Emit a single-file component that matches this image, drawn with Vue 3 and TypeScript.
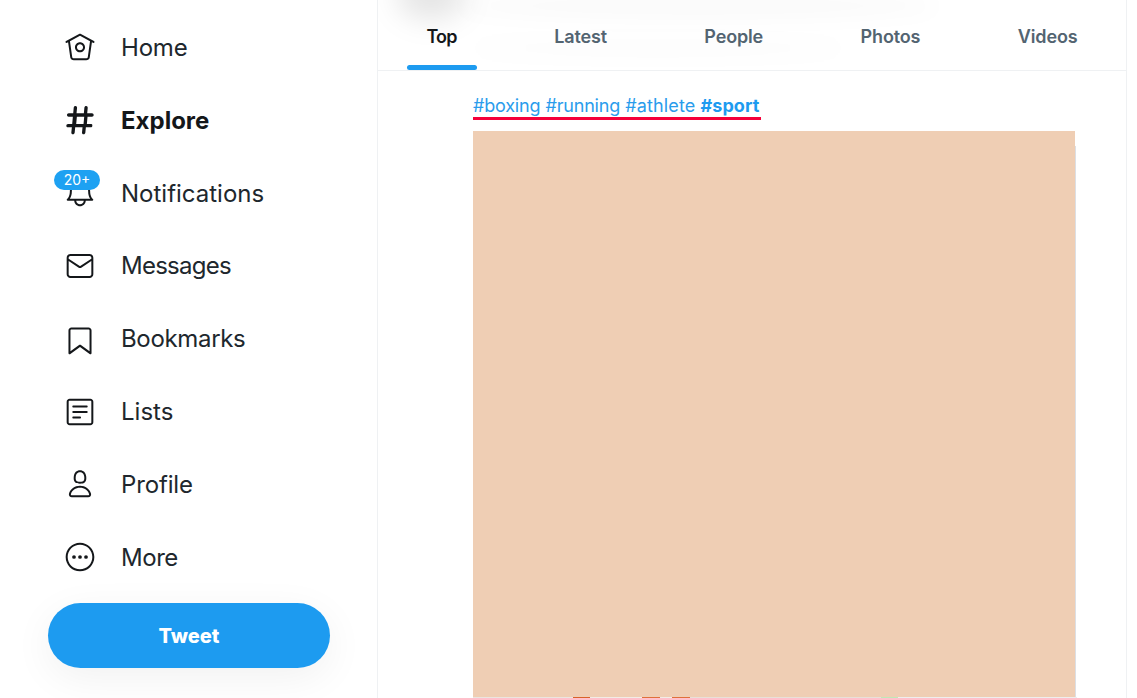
<template>
  <div class="page">
    <aside class="side">
      <nav class="menu">
        <a v-for="item in menu" :key="item.label" class="row" :class="{ on: item.active }">
          <span class="ico">
            <svg viewBox="0 0 24 24" width="32" height="32" fill="currentColor">
              <path v-for="(d, i) in item.paths" :key="i" :d="d" />
              <circle v-if="item.label === 'More'" cx="7.5" cy="12" r="1.4" />
              <circle v-if="item.label === 'More'" cx="12" cy="12" r="1.4" />
              <circle v-if="item.label === 'More'" cx="16.5" cy="12" r="1.4" />
            </svg>
            <span v-if="item.badge" class="badge">{{ item.badge }}</span>
          </span>
          <span class="label" :style="{ letterSpacing: (item.track || 0) + 'px' }">{{ item.label }}</span>
        </a>
      </nav>
      <button type="button" class="tweet">Tweet</button>
    </aside>

    <main class="main">
      <div class="smudge"></div>
      <div class="smudge two"></div>
      <div class="smudge three"></div>
      <div class="tabs">
        <a v-for="(t, i) in tabs" :key="t" class="tab" :class="{ on: i === 0 }">{{ t }}</a>
      </div>
      <section class="post">
        <p class="tags">
          <span class="tight">#boxing</span> <span class="tight">#running</span> <span>#athlete</span> <b>#sport</b>
        </p>
        <!-- censored picture -->
        <div class="pic">
          <i class="fringe-r"></i>
          <i class="fringe-b"></i>
        </div>
      </section>
    </main>
  </div>
</template>

<script setup lang="ts">
interface MenuItem { label: string; paths: string[]; active?: boolean; badge?: string; track?: number }

const menu: MenuItem[] = [
  {
    label: 'Home',
    track: -0.2,
    paths: [
      'M22.46 7.57L12.357 2.115c-.223-.12-.49-.12-.713 0L1.543 7.57c-.364.197-.5.652-.303 1.017.135.25.394.393.66.393.12 0 .243-.03.356-.09l.815-.44L4.7 19.963c.214 1.215 1.308 2.062 2.658 2.062h9.282c1.352 0 2.445-.848 2.663-2.087l1.626-11.49.818.442c.364.193.82.06 1.017-.304.196-.363.06-.818-.304-1.016zm-4.638 12.133c-.107.606-.703.822-1.18.822H7.36c-.48 0-1.075-.216-1.178-.798L4.48 7.69 12 3.628l7.522 4.06-1.7 12.015z',
      'M8.22 12.184c0 2.084 1.695 3.78 3.78 3.78s3.78-1.696 3.78-3.78-1.695-3.78-3.78-3.78-3.78 1.696-3.78 3.78zm6.06 0c0 1.258-1.022 2.28-2.28 2.28s-2.28-1.022-2.28-2.28 1.022-2.28 2.28-2.28 2.28 1.022 2.28 2.28z',
    ],
  },
  {
    label: 'Explore',
    active: true,
    paths: [
      'M21 7h-3.6l.4-4.1c.06-.7-.45-1.3-1.13-1.37-.7-.06-1.3.45-1.37 1.13L14.9 7H9.4l.4-4.1c.06-.7-.45-1.3-1.13-1.37-.7-.06-1.3.45-1.37 1.13L6.9 7H3.5c-.7 0-1.25.56-1.25 1.25S2.8 9.5 3.5 9.5h3.15l-.5 5.5H3c-.7 0-1.25.56-1.25 1.25S2.3 17.5 3 17.5h2.9l-.4 3.85c-.06.7.45 1.3 1.13 1.37h.12c.64 0 1.18-.48 1.25-1.13l.4-4.09h5.5l-.4 3.85c-.06.7.45 1.3 1.13 1.37h.12c.64 0 1.18-.48 1.25-1.13l.4-4.09h3.6c.7 0 1.25-.56 1.25-1.25S21.2 15 20.5 15h-3.35l.5-5.5H21c.7 0 1.25-.56 1.25-1.25S21.7 7 21 7zm-6.35 8h-5.5l.5-5.5h5.5l-.5 5.5z',
    ],
  },
  {
    label: 'Notifications',
    badge: '20+',
    paths: [
      'M21.697 16.468c-.02-.016-2.14-1.64-2.103-6.03.02-2.532-.812-4.782-2.347-6.335C15.872 2.71 14.01 1.94 12.005 1.93h-.013c-2.004.01-3.866.78-5.242 2.174-1.534 1.553-2.368 3.802-2.346 6.334.037 4.33-2.02 5.967-2.102 6.03-.26.193-.366.53-.265.838.102.308.39.515.712.515h4.92c.102 2.31 1.997 4.16 4.33 4.16s4.226-1.85 4.327-4.16h4.922c.322 0 .61-.206.71-.514.103-.307-.003-.645-.263-.838zM12 20.478c-1.505 0-2.73-1.177-2.828-2.658h5.656c-.1 1.48-1.323 2.66-2.828 2.66zM4.38 16.32c.74-1.132 1.548-3.028 1.524-5.896-.018-2.16.644-3.982 1.913-5.267C8.91 4.05 10.397 3.437 12 3.43c1.603.008 3.087.62 4.18 1.728 1.27 1.285 1.933 3.106 1.915 5.267-.024 2.868.785 4.765 1.525 5.896H4.38z',
    ],
  },
  {
    label: 'Messages',
    track: -0.75,
    paths: [
      'M19.25 3.018H4.75C3.233 3.018 2 4.252 2 5.77v12.495c0 1.518 1.233 2.753 2.75 2.753h14.5c1.517 0 2.75-1.235 2.75-2.753V5.77c0-1.518-1.233-2.752-2.75-2.752zm-14.5 1.5h14.5c.69 0 1.25.56 1.25 1.25v.714l-8.05 5.367c-.273.18-.626.182-.9-.002L3.5 6.482v-.714c0-.69.56-1.25 1.25-1.25zm14.5 14.998H4.75c-.69 0-1.25-.56-1.25-1.25V8.24l7.24 4.83c.383.256.822.384 1.26.384.44 0 .877-.128 1.26-.383l7.24-4.83v10.022c0 .69-.56 1.25-1.25 1.25z',
    ],
  },
  {
    label: 'Bookmarks',
    track: -0.33,
    paths: [
      'M19.9 23.5c-.157 0-.312-.05-.442-.144L12 17.928l-7.458 5.43c-.228.164-.53.19-.782.06-.25-.127-.41-.385-.41-.667V5.6c0-1.24 1.01-2.25 2.25-2.25h12.798c1.24 0 2.25 1.01 2.25 2.25v17.15c0 .282-.158.54-.41.668-.106.055-.223.082-.34.082zM12 16.25c.155 0 .31.048.44.144l6.71 4.883V5.6c0-.412-.337-.75-.75-.75H5.6c-.413 0-.75.338-.75.75v15.677l6.71-4.883c.13-.096.285-.144.44-.144z',
    ],
  },
  {
    label: 'Lists',
    paths: [
      'M19.75 22H4.25C3.01 22 2 20.99 2 19.75V4.25C2 3.01 3.01 2 4.25 2h15.5C20.99 2 22 3.01 22 4.25v15.5c0 1.24-1.01 2.25-2.25 2.25zM4.25 3.5c-.414 0-.75.337-.75.75v15.5c0 .413.336.75.75.75h15.5c.414 0 .75-.337.75-.75V4.25c0-.413-.336-.75-.75-.75H4.25z',
      'M17 8.64H7c-.414 0-.75-.337-.75-.75s.336-.75.75-.75h10c.414 0 .75.336.75.75s-.336.75-.75.75zm0 4.11H7c-.414 0-.75-.336-.75-.75s.336-.75.75-.75h10c.414 0 .75.336.75.75s-.336.75-.75.75zm-5 4.11H7c-.414 0-.75-.335-.75-.75s.336-.75.75-.75h5c.414 0 .75.336.75.75s-.336.75-.75.75z',
    ],
  },
  {
    label: 'Profile',
    track: -0.15,
    paths: [
      'M12 11.816c1.355 0 2.872-.15 3.84-1.256.814-.93 1.078-2.368.806-4.392-.38-2.825-2.117-4.512-4.646-4.512S7.734 3.343 7.354 6.17c-.272 2.022-.008 3.46.806 4.39.968 1.107 2.485 1.256 3.84 1.256zM8.84 6.368c.162-1.2.787-3.212 3.16-3.212s2.998 2.013 3.16 3.212c.207 1.55.057 2.627-.45 3.205-.455.52-1.266.743-2.71.743s-2.255-.223-2.71-.743c-.507-.578-.657-1.656-.45-3.205zm11.44 12.868c-.877-3.526-4.282-5.99-8.28-5.99s-7.403 2.464-8.28 5.99c-.172.692-.028 1.4.395 1.94.408.52 1.04.82 1.733.82h12.304c.693 0 1.325-.3 1.733-.82.424-.54.567-1.247.394-1.94zm-1.576 1.016c-.126.16-.316.246-.552.246H5.848c-.235 0-.426-.085-.552-.246-.137-.174-.18-.412-.12-.654.71-2.855 3.517-4.85 6.824-4.85s6.114 1.994 6.824 4.85c.06.242.017.48-.12.654z',
    ],
  },
  {
    label: 'More',
    track: -0.45,
    paths: [
      'M12 22.75C6.072 22.75 1.25 17.928 1.25 12S6.072 1.25 12 1.25 22.75 6.072 22.75 12 17.928 22.75 12 22.75zm0-20C6.9 2.75 2.75 6.9 2.75 12S6.9 21.25 12 21.25s9.25-4.15 9.25-9.25S17.1 2.75 12 2.75z',
    ],
  },
]

const tabs = ['Top', 'Latest', 'People', 'Photos', 'Videos']
</script>

<style>
html, body { height: 100%; margin: 0; overflow: hidden; background: #fff; }
</style>

<style scoped>
.page {
  display: flex;
  width: 1127px;
  height: 698px;
  overflow: hidden;
  font-family: Inter, "Liberation Sans", sans-serif;
  color: #14171a;
  background: #fff;
}
.side {
  width: 377px;
  flex: none;
  padding: 10.87px 0 0 48px;
  box-sizing: border-box;
}
.menu { display: flex; flex-direction: column; }
.row {
  display: flex;
  align-items: center;
  height: 72.87px;
  padding-left: 15.5px;
}
.ico { position: relative; display: flex; width: 32px; height: 32px; color: #14171a; }
.label { margin-left: 25.5px; font-size: 24px; color: #20272d; }
.row.on .label { font-weight: 700; color: #14171a; }
.badge {
  position: absolute;
  left: -9.5px;
  top: -7px;
  width: 46px;
  height: 20px;
  border-radius: 10px;
  background: #1da1f2;
  color: #fff;
  font-size: 14px;
  line-height: 20px;
  text-align: center;
}
.tweet {
  display: block;
  width: 282px;
  height: 65px;
  margin-top: 9.2px;
  padding: 2px 0 0;
  border: 0;
  border-radius: 33px;
  background: #1d9bf0;
  color: #fff;
  font: 800 20px Inter, "Liberation Sans", sans-serif;
  box-shadow: 0 10px 40px rgba(0, 0, 0, 0.06);
}
.main {
  position: relative;
  width: 750px;
  flex: none;
  box-sizing: border-box;
  border-left: 1px solid #eff1f3;
  border-right: 1px solid #eff1f3;
  overflow: hidden;
}
.smudge {
  position: absolute;
  left: 18px;
  top: -30px;
  width: 70px;
  height: 50px;
  border-radius: 50%;
  background: rgba(0, 0, 0, 0.1);
  filter: blur(14px);
}
.smudge.two {
  left: 90px;
  top: 38px;
  width: 380px;
  height: 20px;
  background: rgba(0, 0, 0, 0.012);
  filter: blur(10px);
}
.smudge.three {
  left: 80px;
  top: -8px;
  width: 480px;
  height: 28px;
  background: rgba(0, 0, 0, 0.018);
  filter: blur(10px);
}
.tabs {
  position: relative;
  display: flex;
  justify-content: space-between;
  height: 71px;
  padding: 0 28.5px 0 29px;
  box-sizing: border-box;
  border-bottom: 1px solid #eff1f3;
}
.tab {
  position: relative;
  height: 70px;
  padding: 0 20px;
  line-height: 74px;
  font-size: 18px;
  font-weight: 600;
  letter-spacing: -0.15px;
  color: #536471;
}
.tab.on { color: #14171a; letter-spacing: -0.8px; text-indent: -0.6px; }
.tab.on::after {
  content: "";
  position: absolute;
  left: 0;
  right: 0;
  bottom: 0;
  height: 5px;
  border-radius: 3px;
  background: #1d9bf0;
}
.post { padding: 24px 0 0 95px; }
.tags {
  display: inline-block;
  margin: 0;
  height: 22px;
  padding-right: 1.5px;
  font-size: 18px;
  line-height: 22px;
  letter-spacing: 0.13px;
  color: #2a9cec;
  border-bottom: 3px solid #f5003a;
}
.tags .tight { letter-spacing: -0.2px; }
.tags b { font-weight: 700; color: #1d9bf0; letter-spacing: 0.05px; }
.pic {
  position: relative;
  width: 602px;
  height: 566px;
  margin-top: 11px;
  background: #efceb4;
}
.fringe-r {
  position: absolute;
  left: 100%;
  top: 15px;
  bottom: 0;
  width: 1px;
  background: #dcdfe4;
}
.fringe-b {
  position: absolute;
  left: 0;
  right: -2px;
  top: 100%;
  height: 1px;
  background: linear-gradient(90deg, #ebe5df 0 16.6%, #d9622a 16.6% 19.4%, #f2ece6 19.4% 28%, #e0703c 28% 31%, #f2ece6 31% 33%, #e0703c 33% 36%, #e8e0d8 36% 67.6%, #bfe8b8 67.6% 70.4%, #eee 70.4%);
}
</style>
